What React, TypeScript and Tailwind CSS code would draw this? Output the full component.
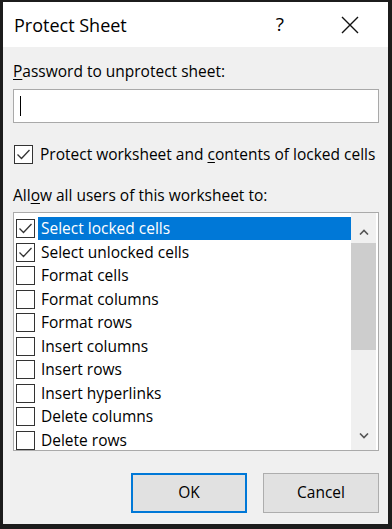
import React from "react";

const font = { fontFamily: '"Open Sans", "Noto Sans", sans-serif' };

function Check({ checked }: { checked: boolean }) {
  return (
    <div className="w-[19px] h-[19px] border-[1.5px] border-[#333333] bg-white flex items-center justify-center shrink-0">
      {checked && (
        <svg width="15" height="15" viewBox="0 0 15 15">
          <polyline points="1.5,7.5 5.5,11.5 13.5,3" fill="none" stroke="#333333" strokeWidth="1.3" />
        </svg>
      )}
    </div>
  );
}

const items: [string, boolean][] = [
  ["Select locked cells", true],
  ["Select unlocked cells", true],
  ["Format cells", false],
  ["Format columns", false],
  ["Format rows", false],
  ["Insert columns", false],
  ["Insert rows", false],
  ["Insert hyperlinks", false],
  ["Delete columns", false],
  ["Delete rows", false],
];

export default function App() {
  return (
    <div className="w-[392px] h-[529px] bg-[#1c1c1c] pt-[2px] pl-[3px] pr-[4px] pb-[5px]" style={font}>
      <div className="flex flex-col h-full bg-[#f0f0f0] text-black">
        <div className="h-[45px] bg-white flex items-center pl-[11px] shrink-0">
          <span className="text-[18px] leading-none">Protect Sheet</span>
          <span className="ml-auto text-[19px] leading-none mr-[57px]">?</span>
          <svg width="18" height="18" viewBox="0 0 18 18" className="mr-[29px]">
            <path d="M1 1 L17 17 M17 1 L1 17" stroke="#111" strokeWidth="1.4" />
          </svg>
        </div>
        <div className="flex flex-col pl-[10px] pr-[9px] text-[15.5px]">
          <div className="mt-[13px] h-[22px] leading-[22px]">
            <span className="underline underline-offset-2">P</span>assword to unprotect sheet:
          </div>
          <div className="mt-[7px] h-[34px] bg-white border border-[#a9a9a9] flex items-center pl-[6px]">
            <div className="w-px h-[20px] bg-black" />
          </div>
          <div className="mt-[21px] h-[20px] flex items-center gap-[7px] pl-[1px]">
            <Check checked />
            <span className="leading-[20px]">
              Protect worksheet and <span className="underline underline-offset-2">c</span>ontents of locked cells
            </span>
          </div>
          <div className="mt-[20px] h-[22px] leading-[22px]">
            All<span className="underline underline-offset-2">o</span>w all users of this worksheet to:
          </div>
          <div className="mt-[6px] h-[239px] bg-white border border-[#aaaaaa] flex">
            <div className="flex-1 flex flex-col pt-[4px] pl-[2px] overflow-hidden">
              {items.map(([label, checked], i) => (
                <div key={label} className="h-[23.5px] flex items-center shrink-0">
                  <Check checked={checked} />
                  <div
                    className={
                      "ml-[3px] flex-1 h-[23px] flex items-center pl-[3px] " +
                      (i === 0 ? "bg-[#0078d7] text-white" : "")
                    }
                  >
                    {label}
                  </div>
                </div>
              ))}
            </div>
            <div className="w-[25px] mr-[2px] bg-[#f0f0f0] flex flex-col">
              <div className="h-[30px] flex items-center justify-center pt-[8px]">
                <svg width="10" height="6" viewBox="0 0 10 6">
                  <polyline points="1,5.5 5,1.5 9,5.5" fill="none" stroke="#555" strokeWidth="1.6" />
                </svg>
              </div>
              <div className="h-[107px] bg-[#cdcdcd]" />
              <div className="flex-1" />
              <div className="h-[30px] flex items-center justify-center pt-[2px]">
                <svg width="10" height="6" viewBox="0 0 10 6">
                  <polyline points="1,0.5 5,4.5 9,0.5" fill="none" stroke="#555" strokeWidth="1.6" />
                </svg>
              </div>
            </div>
          </div>
          <div className="mt-[22px] flex justify-end gap-[16px]">
            <button className="w-[116px] h-[40px] bg-[#e1e1e1] border-2 border-[#0078d7]">OK</button>
            <button className="w-[116px] h-[40px] bg-[#e1e1e1] border border-[#adadad]">Cancel</button>
          </div>
        </div>
      </div>
    </div>
  );
}
